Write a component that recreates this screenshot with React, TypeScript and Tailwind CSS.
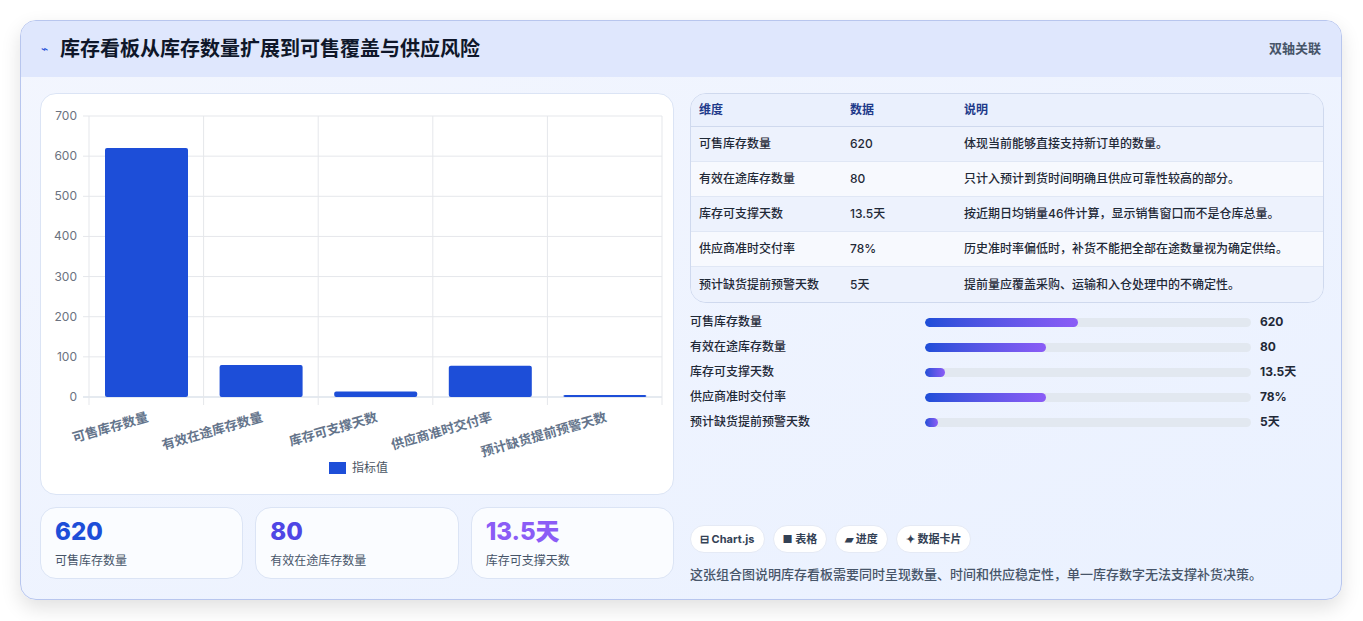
const rows = [
  { k: "可售库存数量", v: "620", d: "体现当前能够直接支持新订单的数量。", n: 620, p: 47 },
  { k: "有效在途库存数量", v: "80", d: "只计入预计到货时间明确且供应可靠性较高的部分。", n: 80, p: 37 },
  { k: "库存可支撑天数", v: "13.5天", d: "按近期日均销量46件计算，显示销售窗口而不是仓库总量。", n: 13.5, p: 6 },
  { k: "供应商准时交付率", v: "78%", d: "历史准时率偏低时，补货不能把全部在途数量视为确定供给。", n: 78, p: 37 },
  { k: "预计缺货提前预警天数", v: "5天", d: "提前量应覆盖采购、运输和入仓处理中的不确定性。", n: 5, p: 4 },
]

function Chart() {
  const x0 = 48, x1 = 621, yTop = 22, yBot = 303
  const h = (yBot - yTop) / 700
  const w = (x1 - x0) / 5
  return (
    <svg width="634" height="402" className="block">
      {[0, 100, 200, 300, 400, 500, 600, 700].map((t) => {
        const y = yBot - t * h
        return (
          <g key={t}>
            <line x1={x0 - 6} x2={x1} y1={y} y2={y} stroke={t === 0 ? "#cbd5e1" : "#e5e7eb"} />
            <text x={x0 - 12} y={y + 4} textAnchor="end" fontSize="12" fill="#6b7280">{t}</text>
          </g>
        )
      })}
      {[0, 1, 2, 3, 4, 5].map((i) => (
        <line key={i} x1={x0 + i * w} x2={x0 + i * w} y1={yTop} y2={yBot + 8} stroke="#e5e7eb" />
      ))}
      {rows.map((r, i) => {
        const bh = r.n * h
        return (
          <g key={r.k}>
            <rect x={x0 + i * w + 16} y={yBot - bh} width={83} height={bh} rx="2" fill="#1d4ed8" />
            <text
              transform={`translate(${x0 + i * w + 60} ${yBot + 24}) rotate(-16)`}
              textAnchor="end"
              fontSize="13"
              fontWeight="600"
              fill="#64748b"
            >
              {r.k}
            </text>
          </g>
        )
      })}
      <rect x="288" y="368" width="17" height="12" fill="#1d4ed8" />
      <text x="311" y="378" fontSize="12" fill="#4b5563">指标值</text>
    </svg>
  )
}

export default function App() {
  return (
    <div className="min-h-screen bg-white pt-5 px-5 pb-5" style={{ fontFamily: "Inter, 'Noto Sans CJK SC', sans-serif" }}>
      <div className="w-[1322px] h-[580px] rounded-2xl border border-[#b8c6ee] overflow-hidden shadow-[0_8px_20px_rgba(0,0,0,0.12)] bg-gradient-to-br from-[#f3f6fe] to-[#eaf1ff]">
        <div className="h-[56px] bg-[#dfe7fd] flex items-center justify-between px-5">
          <div className="flex items-center gap-3">
            <span className="text-[#1d4ed8] text-xs">⌁</span>
            <h1 className="text-[20px] font-bold text-[#0f172a]">库存看板从库存数量扩展到可售覆盖与供应风险</h1>
          </div>
          <span className="text-[13px] text-[#475569] font-semibold">双轴关联</span>
        </div>
        <div className="flex gap-4 pl-[19px] pt-4">
          <div className="w-[634px] flex flex-col gap-3">
            <div className="h-[402px] bg-white rounded-2xl border border-[#dbe4f5]">
              <Chart />
            </div>
            <div className="grid grid-cols-3 gap-3">
              {[
                { v: "620", l: "可售库存数量", c: "text-[#1d4ed8]" },
                { v: "80", l: "有效在途库存数量", c: "text-[#4f46e5]" },
                { v: "13.5天", l: "库存可支撑天数", c: "text-[#8b5cf6]" },
              ].map((k) => (
                <div key={k.l} className="h-[72px] rounded-2xl border border-[#dbe4f5] bg-[#fafcff] px-[14px] pt-2">
                  <div className={`text-[24px] font-extrabold leading-8 ${k.c}`}>{k.v}</div>
                  <div className="text-[12px] text-[#475569] mt-1">{k.l}</div>
                </div>
              ))}
            </div>
          </div>
          <div className="w-[634px] flex flex-col">
            <div className="rounded-2xl border border-[#cfd9ee] overflow-hidden text-[12px]">
              <div className="h-[33px] bg-[#eaf0fd] border-b border-[#cfd9ee] flex items-center font-semibold text-[#1e3a8a]">
                <div className="w-[159px] pl-2">维度</div>
                <div className="w-[114px]">数据</div>
                <div>说明</div>
              </div>
              {rows.map((r, i) => (
                <div key={r.k} className={`h-[35px] flex items-center text-[#1f2937] font-medium ${i % 2 ? "bg-[#f7f9fe]" : "bg-[#edf2fd]"} ${i < 4 ? "border-b border-[#e0e7f5]" : ""}`}>
                  <div className="w-[159px] pl-2">{r.k}</div>
                  <div className="w-[114px]">{r.v}</div>
                  <div>{r.d}</div>
                </div>
              ))}
            </div>
            <div className="mt-[11px] flex flex-col gap-[9px]">
              {rows.map((r) => (
                <div key={r.k} className="h-4 flex items-center text-[12px] font-medium text-[#1f2937]">
                  <div className="w-[235px]">{r.k}</div>
                  <div className="w-[326px] h-[9px] rounded-full bg-[#e2e8f0] overflow-hidden">
                    <div className="h-full rounded-full bg-gradient-to-r from-[#1d4ed8] to-[#8b5cf6]" style={{ width: `${r.p}%` }} />
                  </div>
                  <div className="ml-[9px] font-bold">{r.v}</div>
                </div>
              ))}
            </div>
            <div className="mt-[95px] flex gap-2">
              {["⊟ Chart.js", "■ 表格", "▰ 进度", "✦ 数据卡片"].map((c) => (
                <span key={c} className="h-[28px] px-[9px] flex items-center rounded-full bg-white border border-[#e5eaf5] text-[11px] font-bold text-[#334155]">{c}</span>
              ))}
            </div>
            <p className="mt-[12px] text-[13px] text-[#475569] font-medium">这张组合图说明库存看板需要同时呈现数量、时间和供应稳定性，单一库存数字无法支撑补货决策。</p>
          </div>
        </div>
      </div>
    </div>
  )
}
